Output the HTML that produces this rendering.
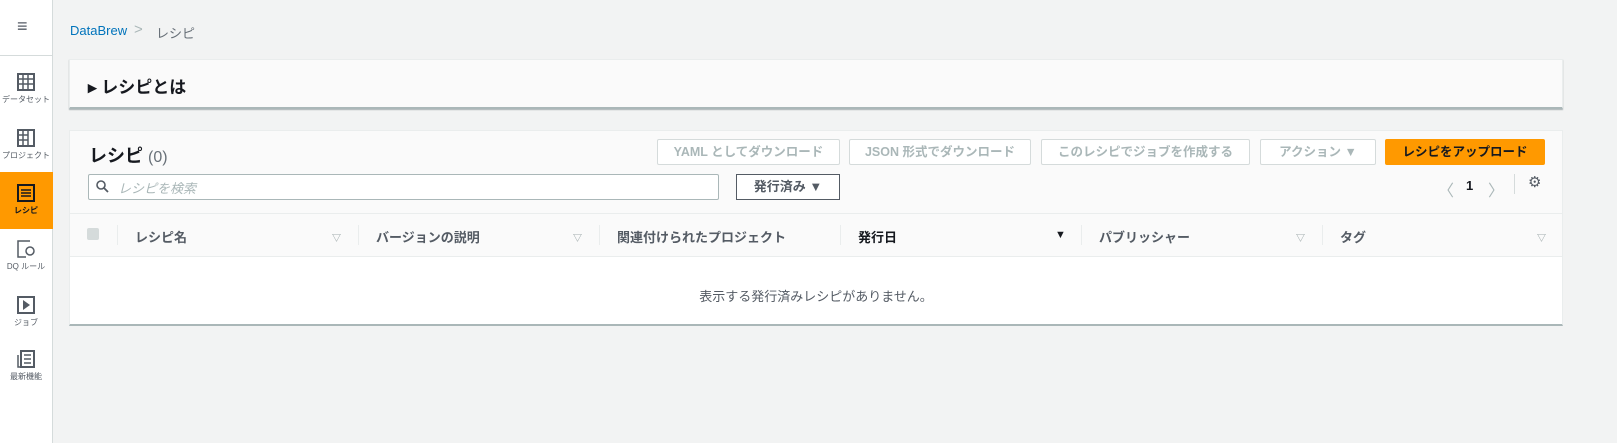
<!DOCTYPE html><html><head><meta charset="utf-8"><style>
*{box-sizing:border-box;margin:0;padding:0}
body{width:1617px;height:443px;background:#f2f3f3;font-family:"Liberation Sans","Noto Sans CJK JP",sans-serif;position:relative;overflow:hidden;color:#16191f}
.side{position:absolute;left:0;top:0;width:53px;height:443px;background:#fff;border-right:1px solid #d5dbdb}
.nav{position:absolute;left:0;width:52px;text-align:center;font-size:8px;color:#545b64}
.nav svg{display:block;margin:0 auto 3px}
.a{position:absolute}
.btn{position:absolute;top:139px;height:26px;border:1px solid #d5dbdb;background:#fff;color:#aab7b8;font-size:12.5px;font-weight:bold;text-align:center;line-height:24px;border-radius:2px}
.th{position:absolute;top:227px;font-size:13px;font-weight:bold;color:#545b64}
.sep{position:absolute;top:225px;width:1px;height:20px;background:#eaeded}
.tri{position:absolute;top:231px;font-size:9px;color:#879596}
</style></head><body>
<div class="side">
<div class="a" style="left:17px;top:16px;font-size:18px;color:#545b64">≡</div>
<div class="a" style="left:0;top:55px;width:52px;height:1px;background:#d5dbdb"></div>
<div class="nav" style="top:73px"><svg width="18" height="18"><rect x="1" y="1" width="16" height="16" fill="none" stroke="#545b64" stroke-width="2"/><path d="M1 6h16M1 11h16M6 1v16M11 1v16" stroke="#545b64" stroke-width="1.5"/></svg>データセット</div>
<div class="nav" style="top:129px"><svg width="18" height="18"><rect x="1" y="1" width="16" height="16" fill="none" stroke="#545b64" stroke-width="2"/><path d="M1 6h10M1 11h10M6 1v16M11 1v16" stroke="#545b64" stroke-width="1.5"/></svg>プロジェクト</div>
<div class="a" style="left:0;top:172px;width:53px;height:57px;background:#ff9900"></div>
<div class="nav" style="top:184px;color:#16191f;font-weight:bold"><svg width="18" height="18"><rect x="1" y="1" width="16" height="16" fill="none" stroke="#16191f" stroke-width="2"/><path d="M4 6h10M4 9h10M4 12h10" stroke="#16191f" stroke-width="1.5"/></svg>レシピ</div>
<div class="nav" style="top:240px"><svg width="18" height="18"><path d="M13 1H1v16h8" fill="none" stroke="#545b64" stroke-width="1.5"/><circle cx="13" cy="11" r="4" fill="none" stroke="#545b64" stroke-width="1.5"/></svg>DQ ルール</div>
<div class="nav" style="top:296px"><svg width="18" height="18"><rect x="1" y="1" width="16" height="16" fill="none" stroke="#545b64" stroke-width="2"/><path d="M6 4l7 5-7 5z" fill="#545b64"/></svg>ジョブ</div>
<div class="nav" style="top:350px"><svg width="18" height="18"><rect x="4" y="1" width="13" height="16" fill="none" stroke="#545b64" stroke-width="2"/><path d="M1 5v12h3M7 5h7M7 9h7M7 13h7" stroke="#545b64" stroke-width="1.5" fill="none"/></svg>最新機能</div>
</div>
<div class="a" style="left:70px;top:23px;font-size:13px;color:#0073bb">DataBrew</div>
<div class="a" style="left:134px;top:21px;font-size:15px;color:#aab7b8">&gt;</div>
<div class="a" style="left:156px;top:23px;font-size:13px;color:#687078">レシピ</div>
<div class="a" style="left:69px;top:59px;width:1494px;height:50px;background:#fafafa;border:1px solid #eaeded;border-bottom:2px solid #aab7b8;box-shadow:0 1px 1px rgba(0,28,36,.3)"></div>
<div class="a" style="left:88px;top:73px;font-size:17px;font-weight:bold">▸ レシピとは</div>
<div class="a" style="left:69px;top:130px;width:1494px;height:196px;background:#fff;border:1px solid #eaeded;border-bottom:2px solid #aab7b8"></div>
<div class="a" style="left:70px;top:131px;width:1492px;height:82px;background:#fafafa"></div>
<div class="a" style="left:70px;top:213px;width:1492px;height:44px;background:#fafafa;border-top:1px solid #eaeded;border-bottom:1px solid #eaeded"></div>
<div class="a" style="left:89px;top:142px;font-size:18px;font-weight:bold">レシピ <span style="font-weight:normal;color:#687078;font-size:16px">(0)</span></div>
<div class="btn" style="left:657px;width:183px">YAML としてダウンロード</div>
<div class="btn" style="left:849px;width:182px">JSON 形式でダウンロード</div>
<div class="btn" style="left:1041px;width:209px">このレシピでジョブを作成する</div>
<div class="btn" style="left:1260px;width:116px">アクション ▼</div>
<div class="btn" style="left:1385px;width:160px;background:#ff9900;border-color:#ff9900;color:#16191f">レシピをアップロード</div>
<div class="a" style="left:88px;top:174px;width:631px;height:26px;border:1px solid #aab7b8;background:#fff;border-radius:2px"></div>
<svg class="a" style="left:96px;top:180px" width="13" height="13"><circle cx="5" cy="5" r="4" fill="none" stroke="#545b64" stroke-width="1.6"/><path d="M8 8l4 4" stroke="#545b64" stroke-width="1.8"/></svg>
<div class="a" style="left:118px;top:178px;font-size:13px;color:#aab7b8;font-style:italic">レシピを検索</div>
<div class="a" style="left:736px;top:174px;width:104px;height:26px;border:1px solid #545b64;background:#fff;font-size:13px;font-weight:bold;color:#545b64;text-align:center;line-height:24px">発行済み ▼</div>
<div class="a" style="left:1438px;top:177px;font-size:16px;color:#aab7b8">〈</div>
<div class="a" style="left:1466px;top:178px;font-size:13px;font-weight:bold">1</div>
<div class="a" style="left:1488px;top:177px;font-size:16px;color:#aab7b8">〉</div>
<div class="a" style="left:1514px;top:174px;width:1px;height:20px;background:#d5dbdb"></div>
<div class="a" style="left:1528px;top:173px;font-size:15px;color:#545b64">⚙</div>
<div class="a" style="left:87px;top:228px;width:12px;height:12px;background:#d5dbdb;border-radius:2px"></div>
<div class="sep" style="left:117px"></div><div class="sep" style="left:358px"></div><div class="sep" style="left:599px"></div><div class="sep" style="left:840px"></div><div class="sep" style="left:1081px"></div><div class="sep" style="left:1322px"></div>
<div class="th" style="left:135px">レシピ名</div><div class="tri" style="left:332px">▽</div>
<div class="th" style="left:376px">バージョンの説明</div><div class="tri" style="left:573px">▽</div>
<div class="th" style="left:617px">関連付けられたプロジェクト</div>
<div class="th" style="left:858px;color:#16191f">発行日</div><div class="tri" style="left:1055px;color:#16191f;font-size:11px;top:229px">▼</div>
<div class="th" style="left:1099px">パブリッシャー</div><div class="tri" style="left:1296px">▽</div>
<div class="th" style="left:1340px">タグ</div><div class="tri" style="left:1537px">▽</div>
<div class="a" style="left:0;top:286px;width:1632px;text-align:center;font-size:13px;color:#545b64">表示する発行済みレシピがありません。</div>
</body></html>
